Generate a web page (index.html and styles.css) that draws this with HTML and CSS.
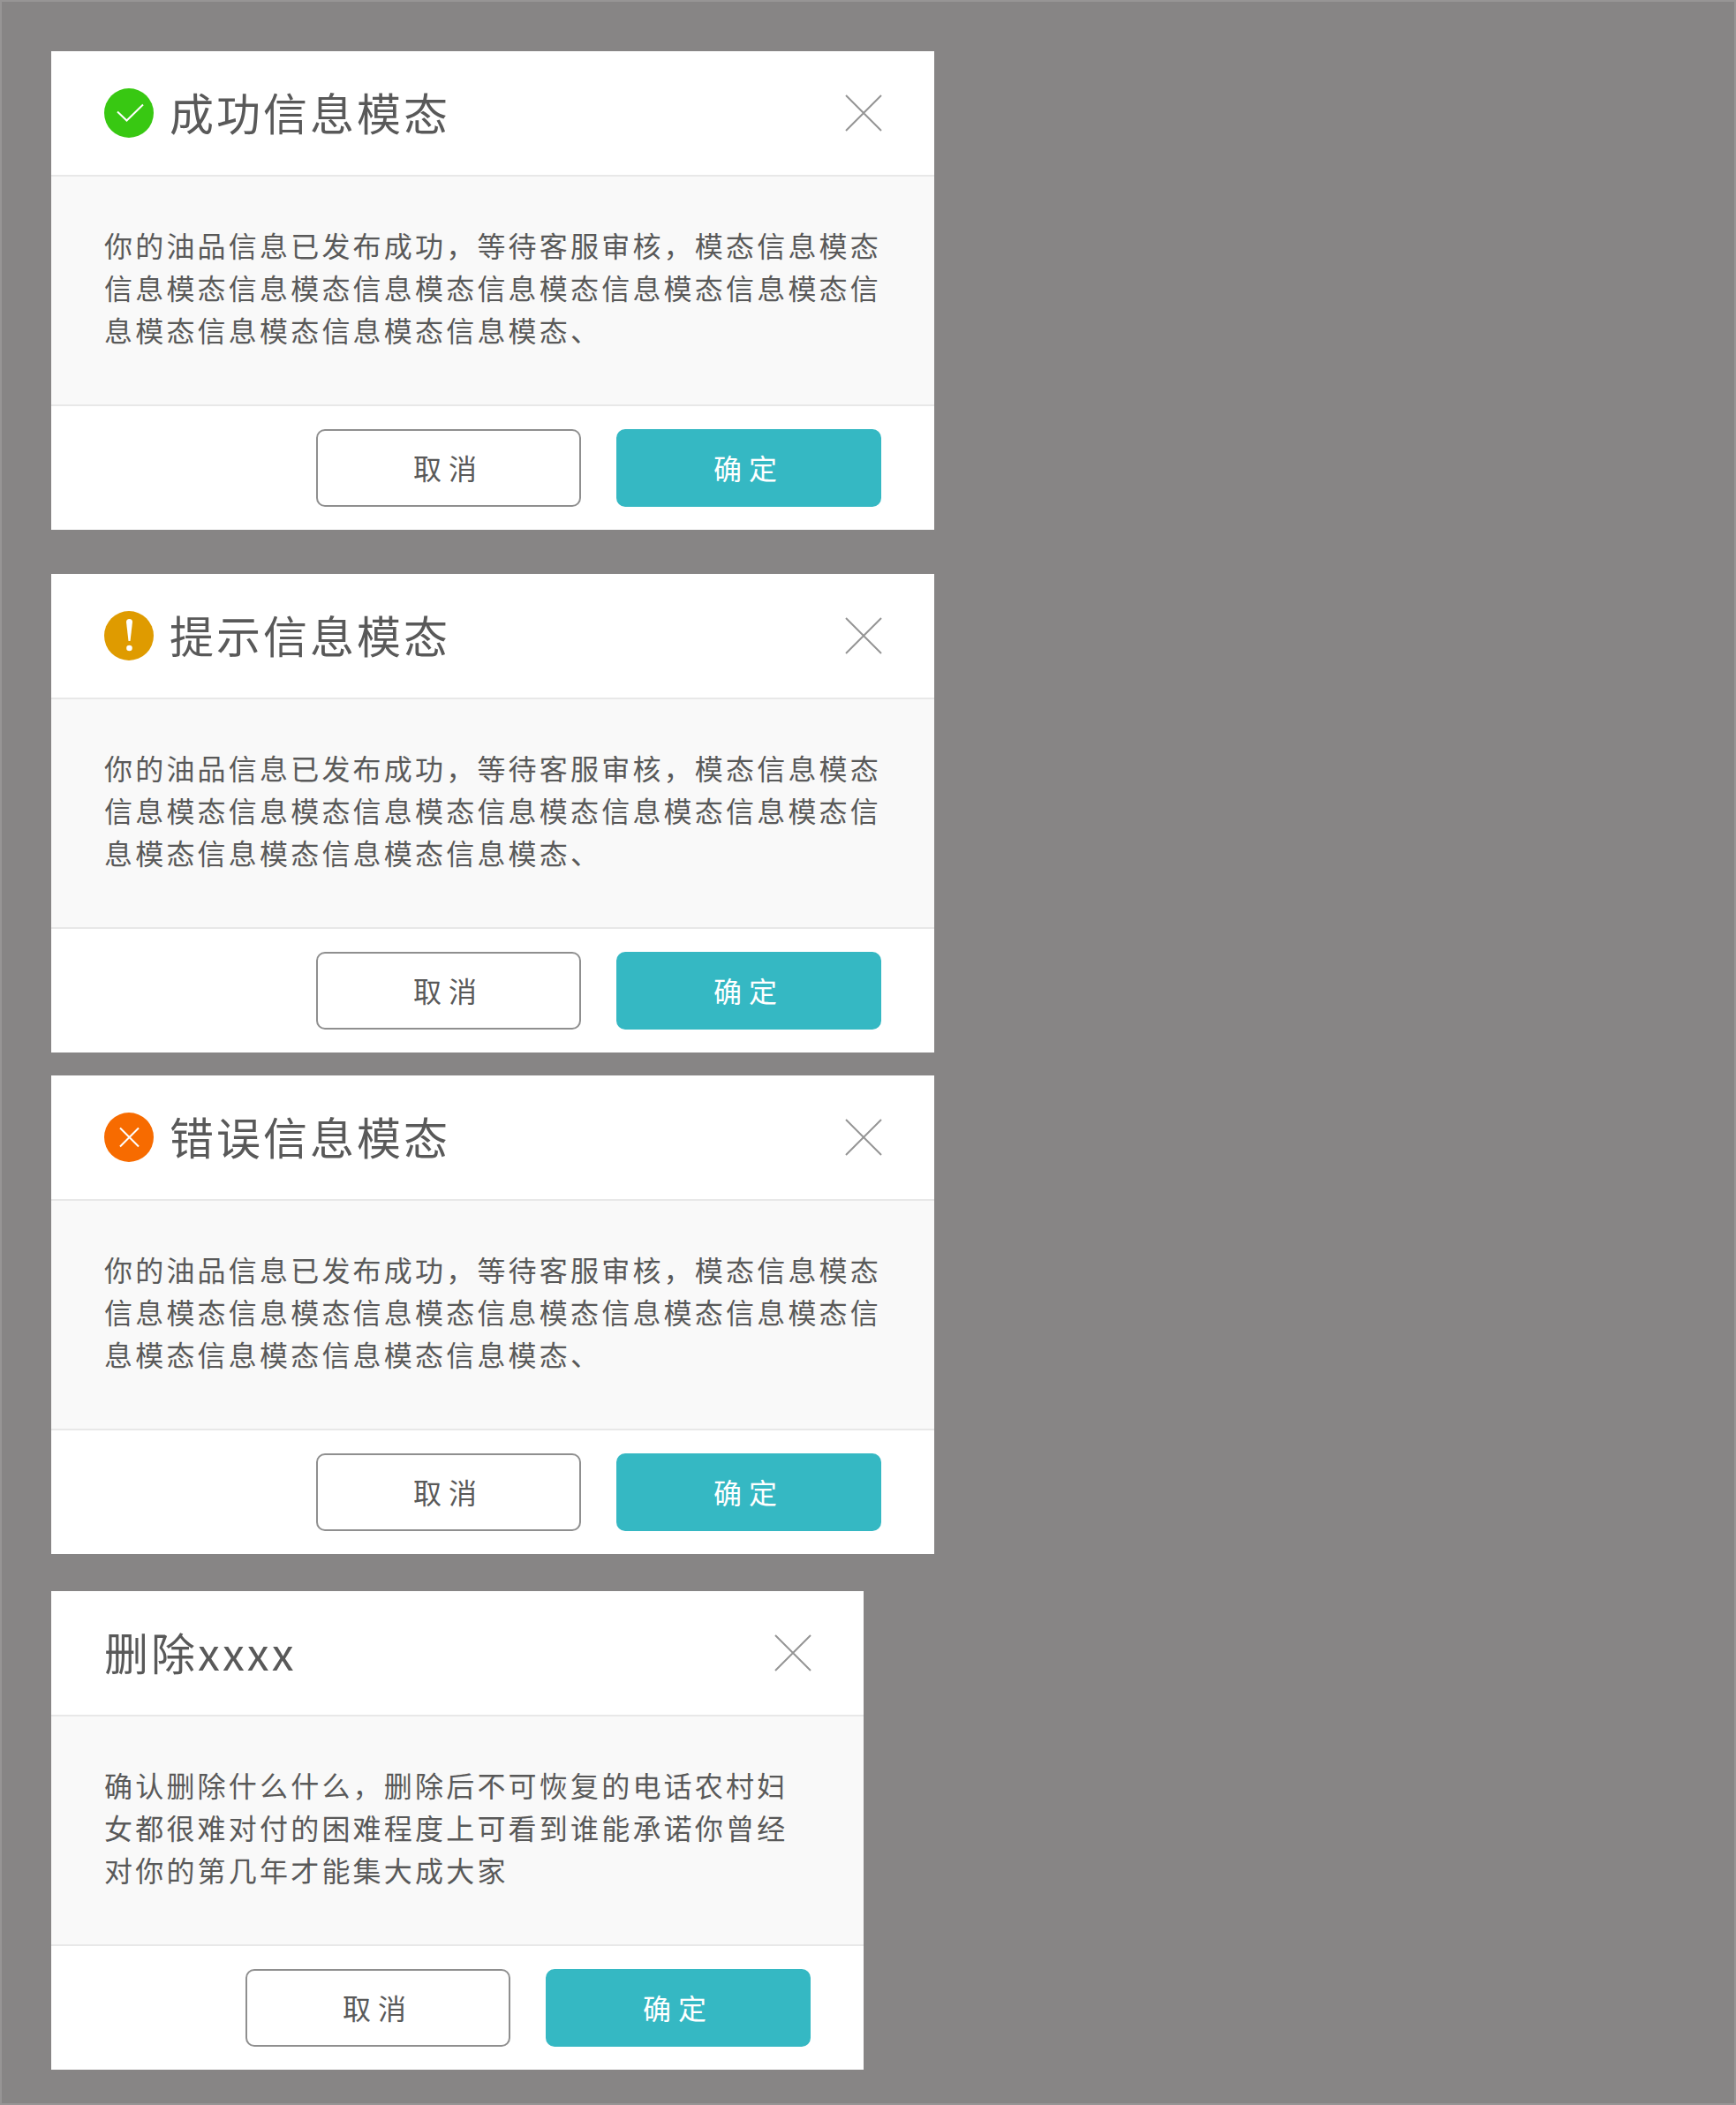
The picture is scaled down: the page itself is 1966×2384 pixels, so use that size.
FILE: index.html
```html
<!DOCTYPE html>
<html lang="zh-CN">
<head>
<meta charset="utf-8">
<meta name="viewport" content="width=device-width, initial-scale=1">
<title>信息模态</title>
<link rel="stylesheet" href="styles.css">
</head>
<body>
<main class="board">
  <section class="modal" role="dialog" aria-labelledby="t1">
    <header class="modal-header">
      <svg class="status" viewBox="0 0 56 56" aria-hidden="true"><circle cx="28" cy="28" r="28" fill="#38c812"/><path d="M15 26.500 25.500 36.500 44 18.500" fill="none" stroke="#fff" stroke-width="2"/></svg>
      <h2 class="modal-title" id="t1">成功信息模态</h2>
      <button class="close" type="button" aria-label="关闭"><svg viewBox="0 0 40 40"><path d="M0 0 40 40M40 0 0 40"/></svg></button>
    </header>
    <p class="modal-body">你的油品信息已发布成功，等待客服审核，模态信息模态信息模态信息模态信息模态信息模态信息模态信息模态信息模态信息模态信息模态信息模态、</p>
    <footer class="modal-footer">
      <button class="btn" type="button">取消</button>
      <button class="btn btn-primary" type="button">确定</button>
    </footer>
  </section>

  <section class="modal" role="dialog" aria-labelledby="t2">
    <header class="modal-header">
      <svg class="status" viewBox="0 0 56 56" aria-hidden="true"><circle cx="28" cy="28" r="28" fill="#df9b00"/><path d="M25 12.500a3.500 3.500 0 0 1 7 0L29.500 34h-2Z" fill="#fff"/><circle cx="28.500" cy="42" r="3.300" fill="#fff"/></svg>
      <h2 class="modal-title" id="t2">提示信息模态</h2>
      <button class="close" type="button" aria-label="关闭"><svg viewBox="0 0 40 40"><path d="M0 0 40 40M40 0 0 40"/></svg></button>
    </header>
    <p class="modal-body">你的油品信息已发布成功，等待客服审核，模态信息模态信息模态信息模态信息模态信息模态信息模态信息模态信息模态信息模态信息模态信息模态、</p>
    <footer class="modal-footer">
      <button class="btn" type="button">取消</button>
      <button class="btn btn-primary" type="button">确定</button>
    </footer>
  </section>

  <section class="modal" role="dialog" aria-labelledby="t3">
    <header class="modal-header">
      <svg class="status" viewBox="0 0 56 56" aria-hidden="true"><circle cx="28" cy="28" r="28" fill="#f76b00"/><path d="M18 17.500 39 38.500M39 17.500 18 38.500" fill="none" stroke="#fff" stroke-width="2"/></svg>
      <h2 class="modal-title" id="t3">错误信息模态</h2>
      <button class="close" type="button" aria-label="关闭"><svg viewBox="0 0 40 40"><path d="M0 0 40 40M40 0 0 40"/></svg></button>
    </header>
    <p class="modal-body">你的油品信息已发布成功，等待客服审核，模态信息模态信息模态信息模态信息模态信息模态信息模态信息模态信息模态信息模态信息模态信息模态、</p>
    <footer class="modal-footer">
      <button class="btn" type="button">取消</button>
      <button class="btn btn-primary" type="button">确定</button>
    </footer>
  </section>

  <section class="modal modal-narrow" role="dialog" aria-labelledby="t4">
    <header class="modal-header">
      <h2 class="modal-title" id="t4">删除xxxx</h2>
      <button class="close" type="button" aria-label="关闭"><svg viewBox="0 0 40 40"><path d="M0 0 40 40M40 0 0 40"/></svg></button>
    </header>
    <p class="modal-body">确认删除什么什么，删除后不可恢复的电话农村妇女都很难对付的困难程度上可看到谁能承诺你曾经对你的第几年才能集大成大家</p>
    <footer class="modal-footer">
      <button class="btn" type="button">取消</button>
      <button class="btn btn-primary" type="button">确定</button>
    </footer>
  </section>
</main>
</body>
</html>
```
FILE: styles.css
```css
* { box-sizing: border-box; }

body {
  margin: 0;
  background: #878585;
  color: #595959;
  font-family: "Noto Sans CJK SC", sans-serif;
}

.board {
  min-height: 100vh;
  padding: 56px 56px 38px;
  border: 2px solid #979595;
}

.modal {
  max-width: 1000px;
  background: #fff;
}

.modal-narrow { max-width: 920px; }

.modal + .modal { margin-top: 50px; }
.modal + .modal + .modal { margin-top: 26px; }
.modal + .modal-narrow.modal-narrow.modal-narrow { margin-top: 42px; }

.modal-header {
  display: flex;
  align-items: center;
  gap: 18px;
  height: 140px;
  padding: 0 60px;
}

.status {
  flex: none;
  width: 56px;
  height: 56px;
}

.modal-title {
  margin: 0;
  padding-bottom: 4px;
  font-size: 50px;
  font-weight: 400;
  line-height: 72px;
  letter-spacing: 3px;
}

.close {
  width: 40px;
  height: 40px;
  margin-left: auto;
  padding: 0;
  border: 0;
  background: none;
  cursor: pointer;
}

.close svg {
  display: block;
  width: 40px;
  height: 40px;
  overflow: visible;
  fill: none;
  stroke: #959595;
  stroke-width: 2;
}

.modal-body {
  margin: 0;
  padding: 53px 54px 61px 60px;
  border-top: 2px solid #e8e8e8;
  border-bottom: 2px solid #e8e8e8;
  background: #f9f9f9;
  font-size: 32px;
  line-height: 48px;
  letter-spacing: 0.1em;
}

.modal-footer {
  display: flex;
  justify-content: flex-end;
  gap: 40px;
  padding: 26px 60px;
}

.btn {
  width: 300px;
  height: 88px;
  padding: 0 0 2px;
  border: 2px solid #8f8f8f;
  border-radius: 10px;
  background: #fff;
  color: #595959;
  font-family: inherit;
  font-size: 32px;
  letter-spacing: 8px;
  cursor: pointer;
}

.btn-primary {
  border-color: #35b8c3;
  background: #35b8c3;
  color: #fff;
}
```
